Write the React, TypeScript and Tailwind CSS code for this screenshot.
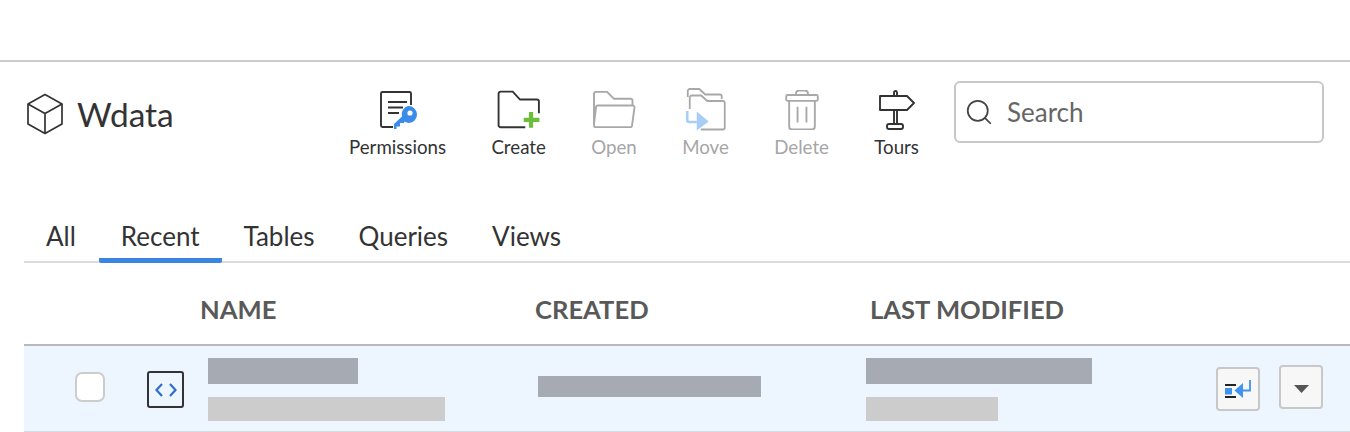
import { Search } from 'lucide-react';

const TABS = ['All', 'Recent', 'Tables', 'Queries', 'Views'];

function Cube() {
  return (
    <svg width="38" height="42" viewBox="0 0 38 42" fill="none" stroke="#333" strokeWidth="1.7" strokeLinejoin="round">
      <path d="M19 1.5 36 11v20L19 40.5 2 31V11z" />
      <path d="M2 11l17 9.5L36 11M19 20.5v20" />
    </svg>
  );
}

function PermissionsIcon() {
  return (
    <svg width="40" height="40" viewBox="0 0 40 40" fill="none">
      <path d="M33 15V3.500a1.500 1.500 0 0 0-1.500-1.500H4.500A1.500 1.500 0 0 0 3 3.500v32A1.500 1.500 0 0 0 4.500 37H15" stroke="#333" strokeWidth="1.9" />
      <path d="M10 12h19M10 17.500h15M10 23h11" stroke="#333" strokeWidth="1.9" />
      <path d="M30 16a8.500 8.500 0 0 1 1 17 8.500 8.500 0 0 1-4.500-1.500L26 33h-4v3.500h-3.500V39H16v-5l8-7.500A8.500 8.500 0 0 1 30 16z" fill="#3b8bea" />
      <circle cx="32" cy="23" r="2.600" fill="#fff" />
    </svg>
  );
}

function CreateIcon() {
  return (
    <svg width="44" height="40" viewBox="0 0 42 38" fill="none">
      <path d="M27 35.500H3.500A2 2 0 0 1 1.500 33.500V3.500a2 2 0 0 1 2-2h11.500l7 7.500h16a2 2 0 0 1 2 2v11" stroke="#333" strokeWidth="1.800" />
      <path d="M32.500 21v15M25.500 28.500h15" stroke="#6bbd3a" strokeWidth="4" />
    </svg>
  );
}

function OpenIcon() {
  return (
    <svg width="44" height="37" viewBox="1 0.700 42 37" className="mb-[2px]" fill="none" stroke="#a8a8a8" strokeWidth="1.900">
      <path d="M2 33V3.500a2 2 0 0 1 2-2h11l7 7h16.500a2 2 0 0 1 2 2V15" />
      <path d="M2 33l2-16a2 2 0 0 1 2-1.800h34.500a2 2 0 0 1 2 2.200l-2.500 18a2 2 0 0 1-2 1.600H4a2 2 0 0 1-2-2z" />
    </svg>
  );
}

function MoveIcon() {
  return (
    <svg width="42" height="43" viewBox="1.500 1 39.500 43" className="-mb-[1px]" fill="none">
      <path d="M3 10V4a2 2 0 0 1 2-2h9.500l6 5.500H35a2 2 0 0 1 2 2V12" stroke="#a8a8a8" strokeWidth="1.800" />
      <path d="M16 42.500h22a2 2 0 0 0 2-2V16a2 2 0 0 0-2-2H22.500l-6-5.500H7a2 2 0 0 0-2 2V22" stroke="#a8a8a8" strokeWidth="1.800" />
      <path d="M2.500 24v9a2 2 0 0 0 2 2H12" stroke="#a8cdf7" strokeWidth="2.600" />
      <path d="M12 24.500 24 34.500 12 43.500z" fill="#a8cdf7" />
    </svg>
  );
}

function TrashIcon() {
  return (
    <svg width="34" height="40" viewBox="0 1 34 40.500" fill="none" stroke="#a8a8a8" strokeWidth="1.900">
      <path d="M11 6V4.500a3 3 0 0 1 3-3h6a3 3 0 0 1 3 3V6" />
      <rect x="1" y="6" width="32" height="6" rx="1.500" />
      <path d="M4 12v26a3 3 0 0 0 3 3h20a3 3 0 0 0 3-3V12" />
      <path d="M12.500 18v16M21.500 18v16" />
    </svg>
  );
}

function SignIcon() {
  return (
    <svg width="36" height="40" viewBox="0 0 36 40" fill="none" stroke="#333" strokeWidth="1.900" strokeLinejoin="round">
      <path d="M15 6V2.500a1.500 1.500 0 0 1 3 0V6" />
      <path d="M1 6h27l7 7-7 7H1z" />
      <path d="M15 20v14M18 20v14" />
      <rect x="8" y="34" width="16" height="5" rx="2" />
    </svg>
  );
}

function ToolButton({ icon, label, disabled }: { icon: React.ReactNode; label: string; disabled?: boolean }) {
  return (
    <div className="flex flex-col items-center">
      <div className="h-[43px] flex items-end justify-center">{icon}</div>
      <span className={`mt-[6px] text-[18.7px] leading-[22px] ${disabled ? 'text-[#a6a6a6]' : 'text-[#333]'}`}>{label}</span>
    </div>
  );
}

function Placeholder({ className }: { className: string }) {
  return <div className={className} />;
}

export default function App() {
  return (
    <div className="w-[1350px] h-[432px] overflow-hidden bg-white font-['Lato','Liberation_Sans',sans-serif]">
      <div className="h-[62px] border-b-[2px] border-[#cccccc]" />

      <div className="h-[118px] flex items-start">
        <div className="w-[349px] pl-[26px] pt-[31px] flex items-center gap-[13px]">
          <Cube />
          <span className="text-[33.5px] leading-[40px] text-[#333]">Wdata</span>
        </div>
        <div className="flex gap-[45.4px] pt-[25px] w-[605px]">
          <ToolButton icon={<PermissionsIcon />} label="Permissions" />
          <ToolButton icon={<CreateIcon />} label="Create" />
          <ToolButton icon={<OpenIcon />} label="Open" disabled />
          <ToolButton icon={<MoveIcon />} label="Move" disabled />
          <ToolButton icon={<TrashIcon />} label="Delete" disabled />
          <ToolButton icon={<SignIcon />} label="Tours" />
        </div>
        <div className="mt-[19px] w-[370px] h-[62px] rounded-[6px] border-[2px] border-[#c8c8c8] flex items-center pl-[8px] gap-[13px]">
          <Search size={30} strokeWidth={1.4} className="text-[#444]" />
          <span className="text-[26px] leading-[32px] text-[#666]">Search</span>
        </div>
      </div>

      <div className="ml-[24px] h-[83px] pt-[37px] border-b-[2px] border-[#dcdcdc] flex items-end">
        {TABS.map((tab) => (
          <div
            key={tab}
            className={`h-[46px] pt-[1px] text-[26px] leading-[36px] text-[#333] rounded-b-[2px] -mb-[2px] border-b-[5px] ${tab === 'All' ? 'pl-[22px] pr-[23px]' : 'px-[22px]'} ${tab === 'Recent' ? 'border-[#3a85e0]' : 'border-transparent'}`}
          >
            {tab}
          </div>
        ))}
      </div>

      <div className="h-[81px] flex items-center pt-[12px] pl-[200px] text-[25.6px] font-bold text-[#595959]">
        <span className="w-[335px]">NAME</span>
        <span className="w-[335px]">CREATED</span>
        <span>LAST MODIFIED</span>
      </div>

      <div className="ml-[24px] h-[88px] bg-[#edf5ff] border-t-[2px] border-[#b8b8b8] border-b-[1px] border-b-[#d8dce0] flex items-start">
        <div className="ml-[51px] mt-[26px] w-[30px] h-[30px] rounded-[7px] border-[2px] border-[#cccccc] bg-white" />
        <div className="ml-[42px] mt-[25px] w-[37px] h-[37px] rounded-[3px] border-[2px] border-[#333] flex items-center justify-center">
          <svg width="22" height="14" viewBox="0 0 22 14" fill="none" stroke="#2f6fc9" strokeWidth="2.200">
            <path d="M7 1 1.500 7 7 13M15 1l5.500 6L15 13" />
          </svg>
        </div>
        <div className="ml-[24px] mt-[12px] w-[330px] flex flex-col gap-[13px]">
          <Placeholder className="w-[150px] h-[26px] bg-[#a6aab2]" />
          <Placeholder className="w-[237px] h-[24px] bg-[#cccccc]" />
        </div>
        <Placeholder className="mt-[30px] w-[223px] h-[21px] bg-[#a6aab2]" />
        <div className="ml-[105px] mt-[12px] w-[350px] flex flex-col gap-[13px]">
          <Placeholder className="w-[226px] h-[26px] bg-[#a6aab2]" />
          <Placeholder className="w-[132px] h-[24px] bg-[#cccccc]" />
        </div>
        <div className="mt-[21px] w-[44px] h-[44px] rounded-[4px] border-[2px] border-[#c8c8c8] bg-[#f7f7f7] flex items-center justify-center">
          <svg width="26" height="18" viewBox="0 0 26 18" fill="none">
            <path d="M0 5h11M0 17h11" stroke="#222" strokeWidth="1.800" />
            <rect x="0" y="8" width="7" height="6.500" fill="#3f92ee" />
            <path d="M9.500 10.500 18 3v15z" fill="#3f92ee" />
            <path d="M17 10.500h8V0" stroke="#3f92ee" strokeWidth="1.800" />
          </svg>
        </div>
        <div className="ml-[19px] mt-[19px] w-[44px] h-[44px] rounded-[4px] border-[2px] border-[#c8c8c8] bg-[#f7f7f7] flex items-center justify-center pt-[4px]">
          <svg width="15" height="8" viewBox="0 0 15 8">
            <path d="M0 0h15L7.500 8z" fill="#555" />
          </svg>
        </div>
      </div>
    </div>
  );
}
